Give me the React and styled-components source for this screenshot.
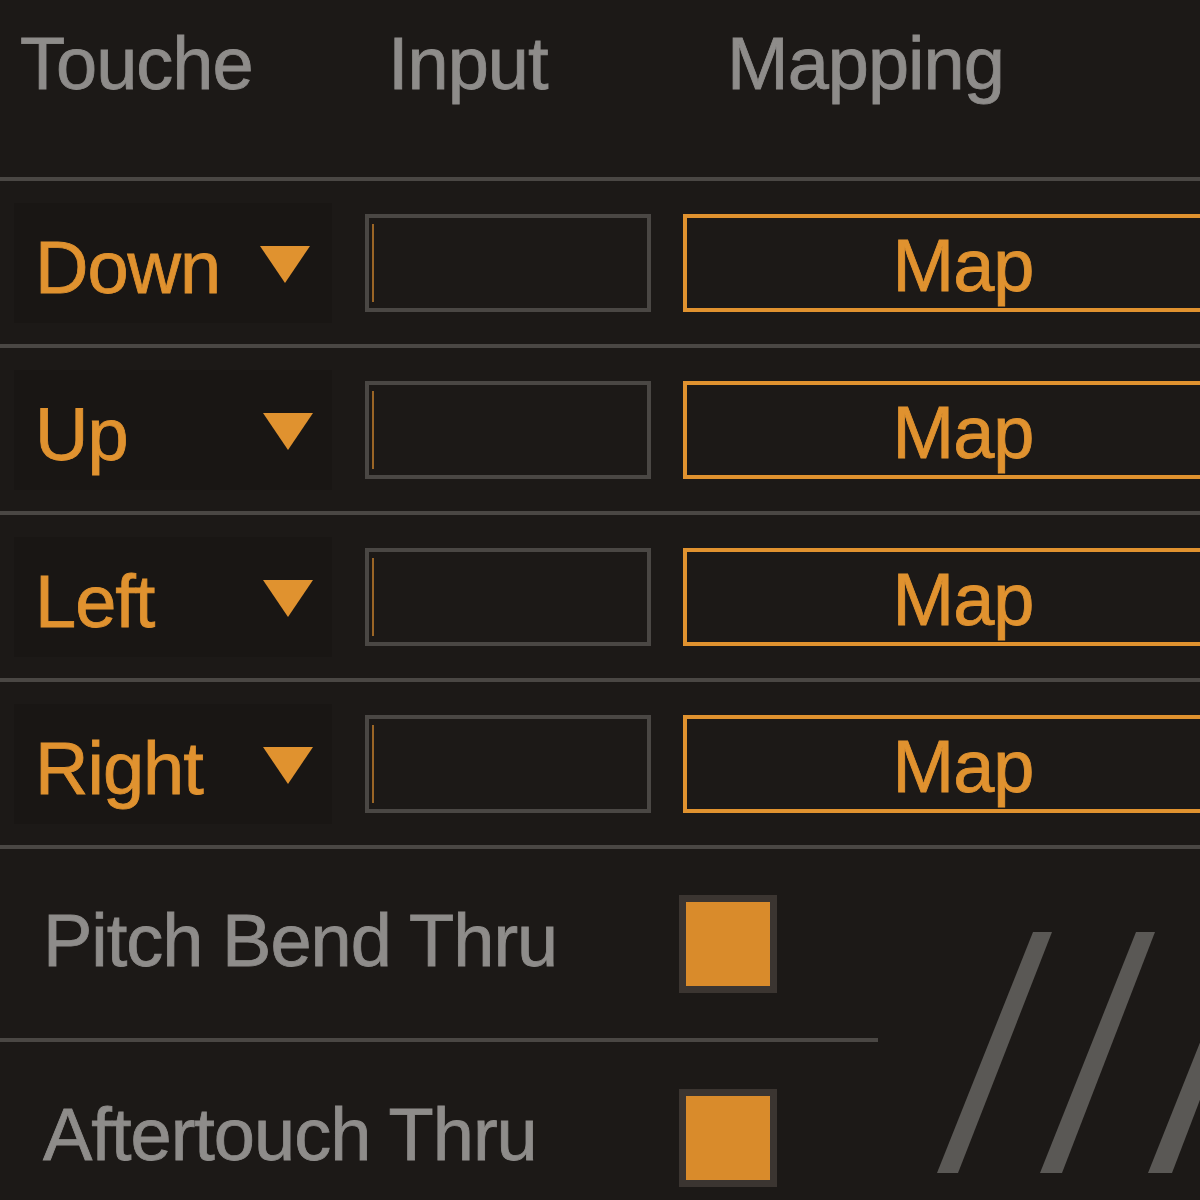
import React from "react";
import styled, { createGlobalStyle } from "styled-components";

const GlobalStyle = createGlobalStyle`
  html, body {
    margin: 0;
    padding: 0;
    background: #1c1917;
  }
`;

const ORANGE = "#e0922f";
const LINE = "#4a4744";
const GREY_TEXT = "#8e8c8a";

const Device = styled.div`
  width: 1200px;
  height: 1200px;
  overflow: hidden;
  background: #1c1917;
  font-family: "Liberation Sans", Arial, sans-serif;
  font-size: 74px;
  letter-spacing: -1px;
  -webkit-text-stroke: 0.8px currentColor;
`;

const Header = styled.div`
  height: 177px;
  display: flex;
  align-items: flex-start;
  color: ${GREY_TEXT};
`;

const HeaderCell = styled.div`
  width: ${(p) => p.width}px;
  flex-shrink: 0;
  padding-left: ${(p) => p.indent}px;
  padding-top: 27px;
  line-height: 74px;
  box-sizing: border-box;
`;

const Rule = styled.div`
  height: 4px;
  width: ${(p) => (p.short ? "878px" : "100%")};
  background: ${LINE};
`;

const Row = styled.div`
  height: 163px;
  display: flex;
  align-items: center;
  overflow: visible;
`;

const Dropdown = styled.div`
  margin-left: 14px;
  width: 318px;
  height: 120px;
  flex-shrink: 0;
  box-sizing: border-box;
  padding-left: 21px;
  padding-right: ${(p) => p.arrowPad}px;
  display: flex;
  align-items: center;
  justify-content: space-between;
  background: #191614;
  color: ${ORANGE};
  line-height: 1;
`;

const DropdownLabel = styled.span`
  padding-top: 10px;
`;

const Arrow = styled.div`
  width: 0;
  height: 0;
  border-left: 25px solid transparent;
  border-right: 25px solid transparent;
  border-top: 37px solid ${ORANGE};
  margin-top: 4px;
`;

const InputBox = styled.div`
  margin-left: 33px;
  width: 286px;
  height: 98px;
  box-sizing: border-box;
  border: 4px solid ${LINE};
  position: relative;
  flex-shrink: 0;

  &::before {
    content: "";
    position: absolute;
    left: 3px;
    top: 6px;
    bottom: 6px;
    width: 2px;
    background: #9a6526;
  }
`;

const MapButton = styled.div`
  margin-left: 32px;
  width: 560px;
  height: 98px;
  flex-shrink: 0;
  box-sizing: border-box;
  border: 4px solid ${ORANGE};
  color: ${ORANGE};
  display: flex;
  align-items: center;
  justify-content: center;
  line-height: 1;
  padding-top: 6px;
`;

const Bottom = styled.div`
  display: flex;
`;

const ToggleColumn = styled.div`
  width: 878px;
  flex-shrink: 0;
  display: flex;
  flex-direction: column;
`;

const ToggleRow = styled.div`
  height: ${(p) => p.h}px;
  display: flex;
  align-items: center;
  padding-left: 43px;
  box-sizing: border-box;
  color: ${GREY_TEXT};
`;

const ToggleLabel = styled.div`
  width: 636px;
  line-height: 1;
  padding-bottom: 6px;
`;

const Checkbox = styled.div`
  width: 98px;
  height: 98px;
  box-sizing: border-box;
  border: 7px solid #3b3531;
  background: ${(p) => (p.on ? "#d98b2b" : "transparent")};
`;

const Stripes = styled.div`
  flex: 1;
  height: 351px;
`;

const mappings = [
  { key: "Down", arrowPad: 22 },
  { key: "Up", arrowPad: 19 },
  { key: "Left", arrowPad: 19 },
  { key: "Right", arrowPad: 19 },
];

function MappingRow({ label, arrowPad }) {
  return (
    <Row>
      <Dropdown arrowPad={arrowPad}>
        <DropdownLabel>{label}</DropdownLabel>
        <Arrow />
      </Dropdown>
      <InputBox />
      <MapButton>Map</MapButton>
    </Row>
  );
}

export default function App() {
  return (
    <>
      <GlobalStyle />
      <Device>
        <Header>
          <HeaderCell width={368} indent={20}>Touche</HeaderCell>
          <HeaderCell width={339} indent={20}>Input</HeaderCell>
          <HeaderCell width={493} indent={20}>Mapping</HeaderCell>
        </Header>
        <Rule />
        {mappings.map((m) => (
          <React.Fragment key={m.key}>
            <MappingRow label={m.key} arrowPad={m.arrowPad} />
            <Rule />
          </React.Fragment>
        ))}
        <Bottom>
          <ToggleColumn>
            <ToggleRow h={189}>
              <ToggleLabel>Pitch Bend Thru</ToggleLabel>
              <Checkbox on />
            </ToggleRow>
            <Rule short />
            <ToggleRow h={192}>
              <ToggleLabel>Aftertouch Thru</ToggleLabel>
              <Checkbox on />
            </ToggleRow>
          </ToggleColumn>
          <Stripes>
            <svg width="322" height="351" viewBox="0 0 322 351">
              <g fill="#5a5855">
                <polygon points="155,83 174,83 80,324 59,324" />
                <polygon points="258,83 277,83 184,324 162,324" />
                <polygon points="366,83 386,83 294,324 270,324" />
              </g>
            </svg>
          </Stripes>
        </Bottom>
      </Device>
    </>
  );
}
